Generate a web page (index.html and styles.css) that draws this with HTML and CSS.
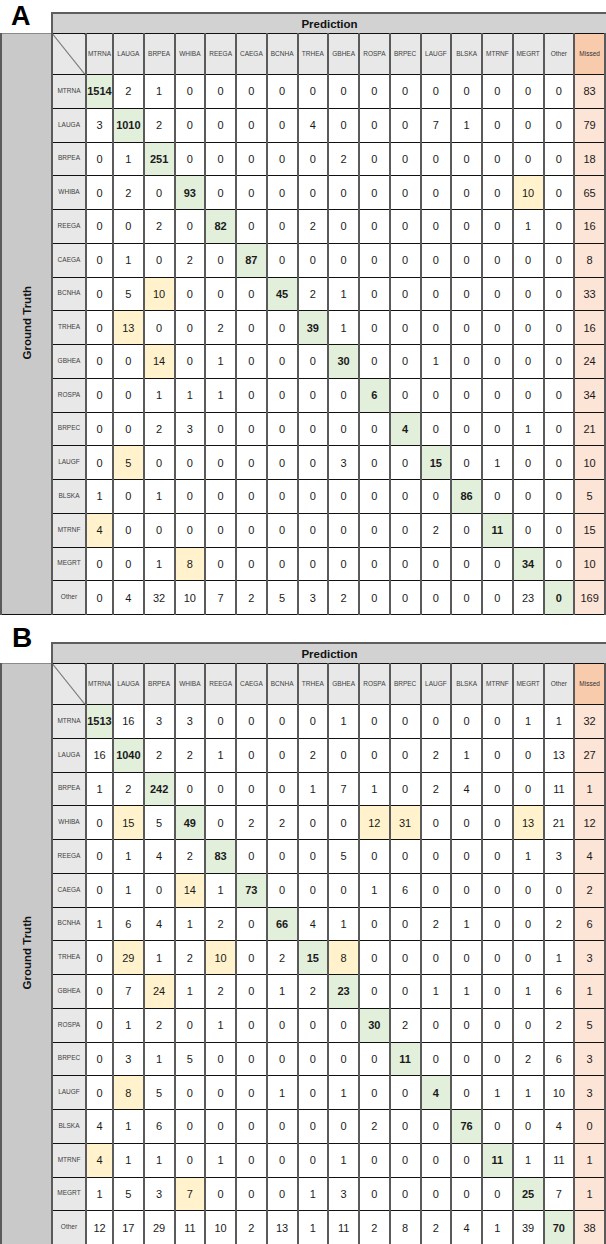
FILE: index.html
```html
<!DOCTYPE html>
<html>
<head>
<meta charset="utf-8">
<link rel="stylesheet" href="styles.css">
</head>
<body>
<div class="page">
  <section class="panel panel-a">
    <div class="panel-head"><div class="letter">A</div><div class="pred">Prediction</div></div>
    <table class="cm">
      <colgroup><col class="c-gt"><col class="c-lab"><col class="c-first"><col span="16"></colgroup>
      <tr class="lab">
        <td class="gt" rowspan="17"><span>Ground Truth</span></td>
        <th class="corner"></th>
        <th>MTRNA</th><th>LAUGA</th><th>BRPEA</th><th>WHIBA</th><th>REEGA</th><th>CAEGA</th><th>BCNHA</th><th>TRHEA</th><th>GBHEA</th><th>ROSPA</th><th>BRPEC</th><th>LAUGF</th><th>BLSKA</th><th>MTRNF</th><th>MEGRT</th><th>Other</th><th class="mh">Missed</th>
      </tr>
      <tr><th>MTRNA</th><td class="g">1514</td><td>2</td><td>1</td><td>0</td><td>0</td><td>0</td><td>0</td><td>0</td><td>0</td><td>0</td><td>0</td><td>0</td><td>0</td><td>0</td><td>0</td><td>0</td><td class="m">83</td></tr>
      <tr><th>LAUGA</th><td>3</td><td class="g">1010</td><td>2</td><td>0</td><td>0</td><td>0</td><td>0</td><td>4</td><td>0</td><td>0</td><td>0</td><td>7</td><td>1</td><td>0</td><td>0</td><td>0</td><td class="m">79</td></tr>
      <tr><th>BRPEA</th><td>0</td><td>1</td><td class="g">251</td><td>0</td><td>0</td><td>0</td><td>0</td><td>0</td><td>2</td><td>0</td><td>0</td><td>0</td><td>0</td><td>0</td><td>0</td><td>0</td><td class="m">18</td></tr>
      <tr><th>WHIBA</th><td>0</td><td>2</td><td>0</td><td class="g">93</td><td>0</td><td>0</td><td>0</td><td>0</td><td>0</td><td>0</td><td>0</td><td>0</td><td>0</td><td>0</td><td class="y">10</td><td>0</td><td class="m">65</td></tr>
      <tr><th>REEGA</th><td>0</td><td>0</td><td>2</td><td>0</td><td class="g">82</td><td>0</td><td>0</td><td>2</td><td>0</td><td>0</td><td>0</td><td>0</td><td>0</td><td>0</td><td>1</td><td>0</td><td class="m">16</td></tr>
      <tr><th>CAEGA</th><td>0</td><td>1</td><td>0</td><td>2</td><td>0</td><td class="g">87</td><td>0</td><td>0</td><td>0</td><td>0</td><td>0</td><td>0</td><td>0</td><td>0</td><td>0</td><td>0</td><td class="m">8</td></tr>
      <tr><th>BCNHA</th><td>0</td><td>5</td><td class="y">10</td><td>0</td><td>0</td><td>0</td><td class="g">45</td><td>2</td><td>1</td><td>0</td><td>0</td><td>0</td><td>0</td><td>0</td><td>0</td><td>0</td><td class="m">33</td></tr>
      <tr><th>TRHEA</th><td>0</td><td class="y">13</td><td>0</td><td>0</td><td>2</td><td>0</td><td>0</td><td class="g">39</td><td>1</td><td>0</td><td>0</td><td>0</td><td>0</td><td>0</td><td>0</td><td>0</td><td class="m">16</td></tr>
      <tr><th>GBHEA</th><td>0</td><td>0</td><td class="y">14</td><td>0</td><td>1</td><td>0</td><td>0</td><td>0</td><td class="g">30</td><td>0</td><td>0</td><td>1</td><td>0</td><td>0</td><td>0</td><td>0</td><td class="m">24</td></tr>
      <tr><th>ROSPA</th><td>0</td><td>0</td><td>1</td><td>1</td><td>1</td><td>0</td><td>0</td><td>0</td><td>0</td><td class="g">6</td><td>0</td><td>0</td><td>0</td><td>0</td><td>0</td><td>0</td><td class="m">34</td></tr>
      <tr><th>BRPEC</th><td>0</td><td>0</td><td>2</td><td>3</td><td>0</td><td>0</td><td>0</td><td>0</td><td>0</td><td>0</td><td class="g">4</td><td>0</td><td>0</td><td>0</td><td>1</td><td>0</td><td class="m">21</td></tr>
      <tr><th>LAUGF</th><td>0</td><td class="y">5</td><td>0</td><td>0</td><td>0</td><td>0</td><td>0</td><td>0</td><td>3</td><td>0</td><td>0</td><td class="g">15</td><td>0</td><td>1</td><td>0</td><td>0</td><td class="m">10</td></tr>
      <tr><th>BLSKA</th><td>1</td><td>0</td><td>1</td><td>0</td><td>0</td><td>0</td><td>0</td><td>0</td><td>0</td><td>0</td><td>0</td><td>0</td><td class="g">86</td><td>0</td><td>0</td><td>0</td><td class="m">5</td></tr>
      <tr><th>MTRNF</th><td class="y">4</td><td>0</td><td>0</td><td>0</td><td>0</td><td>0</td><td>0</td><td>0</td><td>0</td><td>0</td><td>0</td><td>2</td><td>0</td><td class="g">11</td><td>0</td><td>0</td><td class="m">15</td></tr>
      <tr><th>MEGRT</th><td>0</td><td>0</td><td>1</td><td class="y">8</td><td>0</td><td>0</td><td>0</td><td>0</td><td>0</td><td>0</td><td>0</td><td>0</td><td>0</td><td>0</td><td class="g">34</td><td>0</td><td class="m">10</td></tr>
      <tr><th>Other</th><td>0</td><td>4</td><td>32</td><td>10</td><td>7</td><td>2</td><td>5</td><td>3</td><td>2</td><td>0</td><td>0</td><td>0</td><td>0</td><td>0</td><td>23</td><td class="g">0</td><td class="m">169</td></tr>
    </table>
  </section>

  <section class="panel panel-b">
    <div class="panel-head"><div class="letter">B</div><div class="pred">Prediction</div></div>
    <table class="cm">
      <colgroup><col class="c-gt"><col class="c-lab"><col class="c-first"><col span="16"></colgroup>
      <tr class="lab">
        <td class="gt" rowspan="17"><span>Ground Truth</span></td>
        <th class="corner"></th>
        <th>MTRNA</th><th>LAUGA</th><th>BRPEA</th><th>WHIBA</th><th>REEGA</th><th>CAEGA</th><th>BCNHA</th><th>TRHEA</th><th>GBHEA</th><th>ROSPA</th><th>BRPEC</th><th>LAUGF</th><th>BLSKA</th><th>MTRNF</th><th>MEGRT</th><th>Other</th><th class="mh">Missed</th>
      </tr>
      <tr><th>MTRNA</th><td class="g">1513</td><td>16</td><td>3</td><td>3</td><td>0</td><td>0</td><td>0</td><td>0</td><td>1</td><td>0</td><td>0</td><td>0</td><td>0</td><td>0</td><td>1</td><td>1</td><td class="m">32</td></tr>
      <tr><th>LAUGA</th><td>16</td><td class="g">1040</td><td>2</td><td>2</td><td>1</td><td>0</td><td>0</td><td>2</td><td>0</td><td>0</td><td>0</td><td>2</td><td>1</td><td>0</td><td>0</td><td>13</td><td class="m">27</td></tr>
      <tr><th>BRPEA</th><td>1</td><td>2</td><td class="g">242</td><td>0</td><td>0</td><td>0</td><td>0</td><td>1</td><td>7</td><td>1</td><td>0</td><td>2</td><td>4</td><td>0</td><td>0</td><td>11</td><td class="m">1</td></tr>
      <tr><th>WHIBA</th><td>0</td><td class="y">15</td><td>5</td><td class="g">49</td><td>0</td><td>2</td><td>2</td><td>0</td><td>0</td><td class="y">12</td><td class="y">31</td><td>0</td><td>0</td><td>0</td><td class="y">13</td><td>21</td><td class="m">12</td></tr>
      <tr><th>REEGA</th><td>0</td><td>1</td><td>4</td><td>2</td><td class="g">83</td><td>0</td><td>0</td><td>0</td><td>5</td><td>0</td><td>0</td><td>0</td><td>0</td><td>0</td><td>1</td><td>3</td><td class="m">4</td></tr>
      <tr><th>CAEGA</th><td>0</td><td>1</td><td>0</td><td class="y">14</td><td>1</td><td class="g">73</td><td>0</td><td>0</td><td>0</td><td>1</td><td>6</td><td>0</td><td>0</td><td>0</td><td>0</td><td>0</td><td class="m">2</td></tr>
      <tr><th>BCNHA</th><td>1</td><td>6</td><td>4</td><td>1</td><td>2</td><td>0</td><td class="g">66</td><td>4</td><td>1</td><td>0</td><td>0</td><td>2</td><td>1</td><td>0</td><td>0</td><td>2</td><td class="m">6</td></tr>
      <tr><th>TRHEA</th><td>0</td><td class="y">29</td><td>1</td><td>2</td><td class="y">10</td><td>0</td><td>2</td><td class="g">15</td><td class="y">8</td><td>0</td><td>0</td><td>0</td><td>0</td><td>0</td><td>0</td><td>1</td><td class="m">3</td></tr>
      <tr><th>GBHEA</th><td>0</td><td>7</td><td class="y">24</td><td>1</td><td>2</td><td>0</td><td>1</td><td>2</td><td class="g">23</td><td>0</td><td>0</td><td>1</td><td>1</td><td>0</td><td>1</td><td>6</td><td class="m">1</td></tr>
      <tr><th>ROSPA</th><td>0</td><td>1</td><td>2</td><td>0</td><td>1</td><td>0</td><td>0</td><td>0</td><td>0</td><td class="g">30</td><td>2</td><td>0</td><td>0</td><td>0</td><td>0</td><td>2</td><td class="m">5</td></tr>
      <tr><th>BRPEC</th><td>0</td><td>3</td><td>1</td><td>5</td><td>0</td><td>0</td><td>0</td><td>0</td><td>0</td><td>0</td><td class="g">11</td><td>0</td><td>0</td><td>0</td><td>2</td><td>6</td><td class="m">3</td></tr>
      <tr><th>LAUGF</th><td>0</td><td class="y">8</td><td>5</td><td>0</td><td>0</td><td>0</td><td>1</td><td>0</td><td>1</td><td>0</td><td>0</td><td class="g">4</td><td>0</td><td>1</td><td>1</td><td>10</td><td class="m">3</td></tr>
      <tr><th>BLSKA</th><td>4</td><td>1</td><td>6</td><td>0</td><td>0</td><td>0</td><td>0</td><td>0</td><td>0</td><td>2</td><td>0</td><td>0</td><td class="g">76</td><td>0</td><td>0</td><td>4</td><td class="m">0</td></tr>
      <tr><th>MTRNF</th><td class="y">4</td><td>1</td><td>1</td><td>0</td><td>1</td><td>0</td><td>0</td><td>0</td><td>1</td><td>0</td><td>0</td><td>0</td><td>0</td><td class="g">11</td><td>1</td><td>11</td><td class="m">1</td></tr>
      <tr><th>MEGRT</th><td>1</td><td>5</td><td>3</td><td class="y">7</td><td>0</td><td>0</td><td>0</td><td>1</td><td>3</td><td>0</td><td>0</td><td>0</td><td>0</td><td>0</td><td class="g">25</td><td>7</td><td class="m">1</td></tr>
      <tr><th>Other</th><td>12</td><td>17</td><td>29</td><td>11</td><td>10</td><td>2</td><td>13</td><td>1</td><td>11</td><td>2</td><td>8</td><td>2</td><td>4</td><td>1</td><td>39</td><td class="g">70</td><td class="m">38</td></tr>
    </table>
  </section>
</div>
</body>
</html>
```

FILE: styles.css
```css
* {
  box-sizing: border-box;
}

body {
  margin: 0;
  background: #ffffff;
  font-family: "Liberation Sans", Arial, sans-serif;
  color: #1a1a1a;
}

.page {
  width: 606px;
}

.panel-b {
  margin-top: 7px;
}

.panel-head {
  display: flex;
  height: 33px;
}

.panel-b .panel-head {
  height: 41px;
}

.letter {
  width: 51px;
  flex: none;
  align-self: flex-start;
  padding-left: 11px;
  padding-top: 3px;
  font-size: 27px;
  line-height: 26px;
  font-weight: bold;
  color: #000;
}

.panel-b .letter {
  padding-left: 12px;
  font-size: 28px;
  line-height: 28px;
  padding-top: 2px;
}

.pred {
  flex: 1;
  align-self: flex-end;
  height: 21px;
  background: #d2d2d2;
  border-top: 2px solid #5e5e5e;
  border-left: 2px solid #5e5e5e;
  display: flex;
  align-items: center;
  justify-content: center;
  font-size: 11.5px;
  font-weight: bold;
  color: #111;
}

.cm {
  width: 606px;
  table-layout: fixed;
  border-collapse: collapse;
}

.cm col.c-gt {
  width: 51px;
}

.cm col.c-lab {
  width: 34px;
}

.cm col.c-first {
  width: 27px;
}

.cm tr {
  height: 33.75px;
}

.cm tr.lab {
  height: 41px;
}

.cm td,
.cm th {
  padding: 0;
  border-top: 1px solid #111111;
  border-bottom: 1px solid #111111;
  border-left: 2px solid #5a5a5a;
  border-right: 2px solid #5a5a5a;
  text-align: center;
  vertical-align: middle;
  background: #ffffff;
  font-size: 11px;
  font-weight: normal;
  overflow: hidden;
  white-space: nowrap;
}

.cm th {
  background: #e8e8e8;
  font-size: 6.5px;
  color: #404040;
  padding-bottom: 2px;
}

.cm th.corner {
  background: #e8e8e8 linear-gradient(to top right, transparent calc(50% - 0.7px), #3a3a3a 50%, transparent calc(50% + 0.7px));
}

.cm th.mh {
  background: #f8cbad;
  color: #333;
}

.cm td.gt {
  background: #c9c9c9;
  border-left: 2px solid #5a5a5a;
  border-top: 1px solid #8a8a8a;
}

.gt span {
  display: inline-block;
  writing-mode: vertical-rl;
  transform: rotate(180deg);
  font-size: 11.5px;
  font-weight: bold;
  color: #111;
}

.cm td.g {
  background: #e2efda;
  font-weight: bold;
}

.cm td.y {
  background: #fff2cc;
}

.cm td.m {
  background: #fce4d6;
}
```
